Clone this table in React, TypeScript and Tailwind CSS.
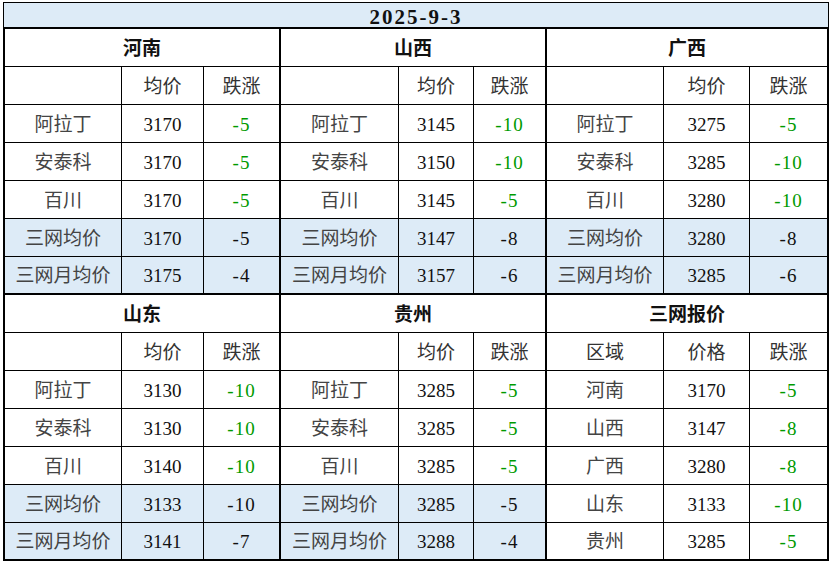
const FONT = "font-['Liberation_Serif','Noto_Sans_CJK_SC',serif]";

type Row = { name: string; price: number; change: number; avg?: boolean };

type Block = {
  region: string;
  cols: string;
  head: [string, string, string];
  rows: Row[];
};

const top: Block[] = [
  {
    region: '河南',
    cols: 'grid-cols-[116px_81px_75px]',
    head: ['', '均价', '跌涨'],
    rows: [
      { name: '阿拉丁', price: 3170, change: -5 },
      { name: '安泰科', price: 3170, change: -5 },
      { name: '百川', price: 3170, change: -5 },
      { name: '三网均价', price: 3170, change: -5, avg: true },
      { name: '三网月均价', price: 3175, change: -4, avg: true },
    ],
  },
  {
    region: '山西',
    cols: 'grid-cols-[117px_74px_71px]',
    head: ['', '均价', '跌涨'],
    rows: [
      { name: '阿拉丁', price: 3145, change: -10 },
      { name: '安泰科', price: 3150, change: -10 },
      { name: '百川', price: 3145, change: -5 },
      { name: '三网均价', price: 3147, change: -8, avg: true },
      { name: '三网月均价', price: 3157, change: -6, avg: true },
    ],
  },
  {
    region: '广西',
    cols: 'grid-cols-[116px_85px_77px]',
    head: ['', '均价', '跌涨'],
    rows: [
      { name: '阿拉丁', price: 3275, change: -5 },
      { name: '安泰科', price: 3285, change: -10 },
      { name: '百川', price: 3280, change: -10 },
      { name: '三网均价', price: 3280, change: -8, avg: true },
      { name: '三网月均价', price: 3285, change: -6, avg: true },
    ],
  },
];

const bottom: Block[] = [
  {
    region: '山东',
    cols: 'grid-cols-[116px_81px_75px]',
    head: ['', '均价', '跌涨'],
    rows: [
      { name: '阿拉丁', price: 3130, change: -10 },
      { name: '安泰科', price: 3130, change: -10 },
      { name: '百川', price: 3140, change: -10 },
      { name: '三网均价', price: 3133, change: -10, avg: true },
      { name: '三网月均价', price: 3141, change: -7, avg: true },
    ],
  },
  {
    region: '贵州',
    cols: 'grid-cols-[117px_74px_71px]',
    head: ['', '均价', '跌涨'],
    rows: [
      { name: '阿拉丁', price: 3285, change: -5 },
      { name: '安泰科', price: 3285, change: -5 },
      { name: '百川', price: 3285, change: -5 },
      { name: '三网均价', price: 3285, change: -5, avg: true },
      { name: '三网月均价', price: 3288, change: -4, avg: true },
    ],
  },
  {
    region: '三网报价',
    cols: 'grid-cols-[116px_85px_77px]',
    head: ['区域', '价格', '跌涨'],
    rows: [
      { name: '河南', price: 3170, change: -5 },
      { name: '山西', price: 3147, change: -8 },
      { name: '广西', price: 3280, change: -8 },
      { name: '山东', price: 3133, change: -10 },
      { name: '贵州', price: 3285, change: -5 },
    ],
  },
];

const CELL = 'flex items-center justify-center pt-[3px]';

// ── One region block ─────────────────────────────────────────────────────────
function RegionBlock({ block }: { block: Block }) {
  return (
    <div
      className={`grid ${block.cols} grid-rows-[37px_37px_37px_37px_37px_37px_36px] gap-px bg-black`}
    >
      <div className={`col-span-3 ${CELL} bg-white font-bold text-[#111]`}>
        {block.region}
      </div>
      {block.head.map((h, i) => (
        <div key={i} className={`${CELL} bg-white text-[#333]`}>
          {h}
        </div>
      ))}
      {block.rows.map(r => {
        const bg = r.avg ? 'bg-[#ddebf7]' : 'bg-white';
        return [
          <div key={r.name + 'n'} className={`${CELL} ${bg} text-[#444]`}>
            {r.name}
          </div>,
          <div key={r.name + 'p'} className={`${CELL} ${bg} text-[#111]`}>
            {r.price}
          </div>,
          <div
            key={r.name + 'c'}
            className={`${CELL} ${bg} tracking-[1px] ${r.avg ? 'text-[#111]' : 'text-[#009a00]'}`}
          >
            {r.change}
          </div>,
        ];
      })}
    </div>
  );
}

export default function App() {
  return (
    <div className={`w-[832px] h-[562px] bg-white pl-[3px] pt-[2px] text-[19px] ${FONT}`}>
      <div className="w-[826px]">
        <div className="h-[25px] border border-b-0 border-black bg-[#ddebf7] flex items-center justify-center pt-[4px] text-[21px] font-bold leading-none tracking-[2px] text-[#111]">
          2025-9-3
        </div>
        <div className="flex flex-col gap-[2px] bg-black p-[2px]">
          <div className="flex gap-[2px]">
            {top.map(b => (
              <RegionBlock key={b.region} block={b} />
            ))}
          </div>
          <div className="flex gap-[2px]">
            {bottom.map(b => (
              <RegionBlock key={b.region} block={b} />
            ))}
          </div>
        </div>
      </div>
    </div>
  );
}
